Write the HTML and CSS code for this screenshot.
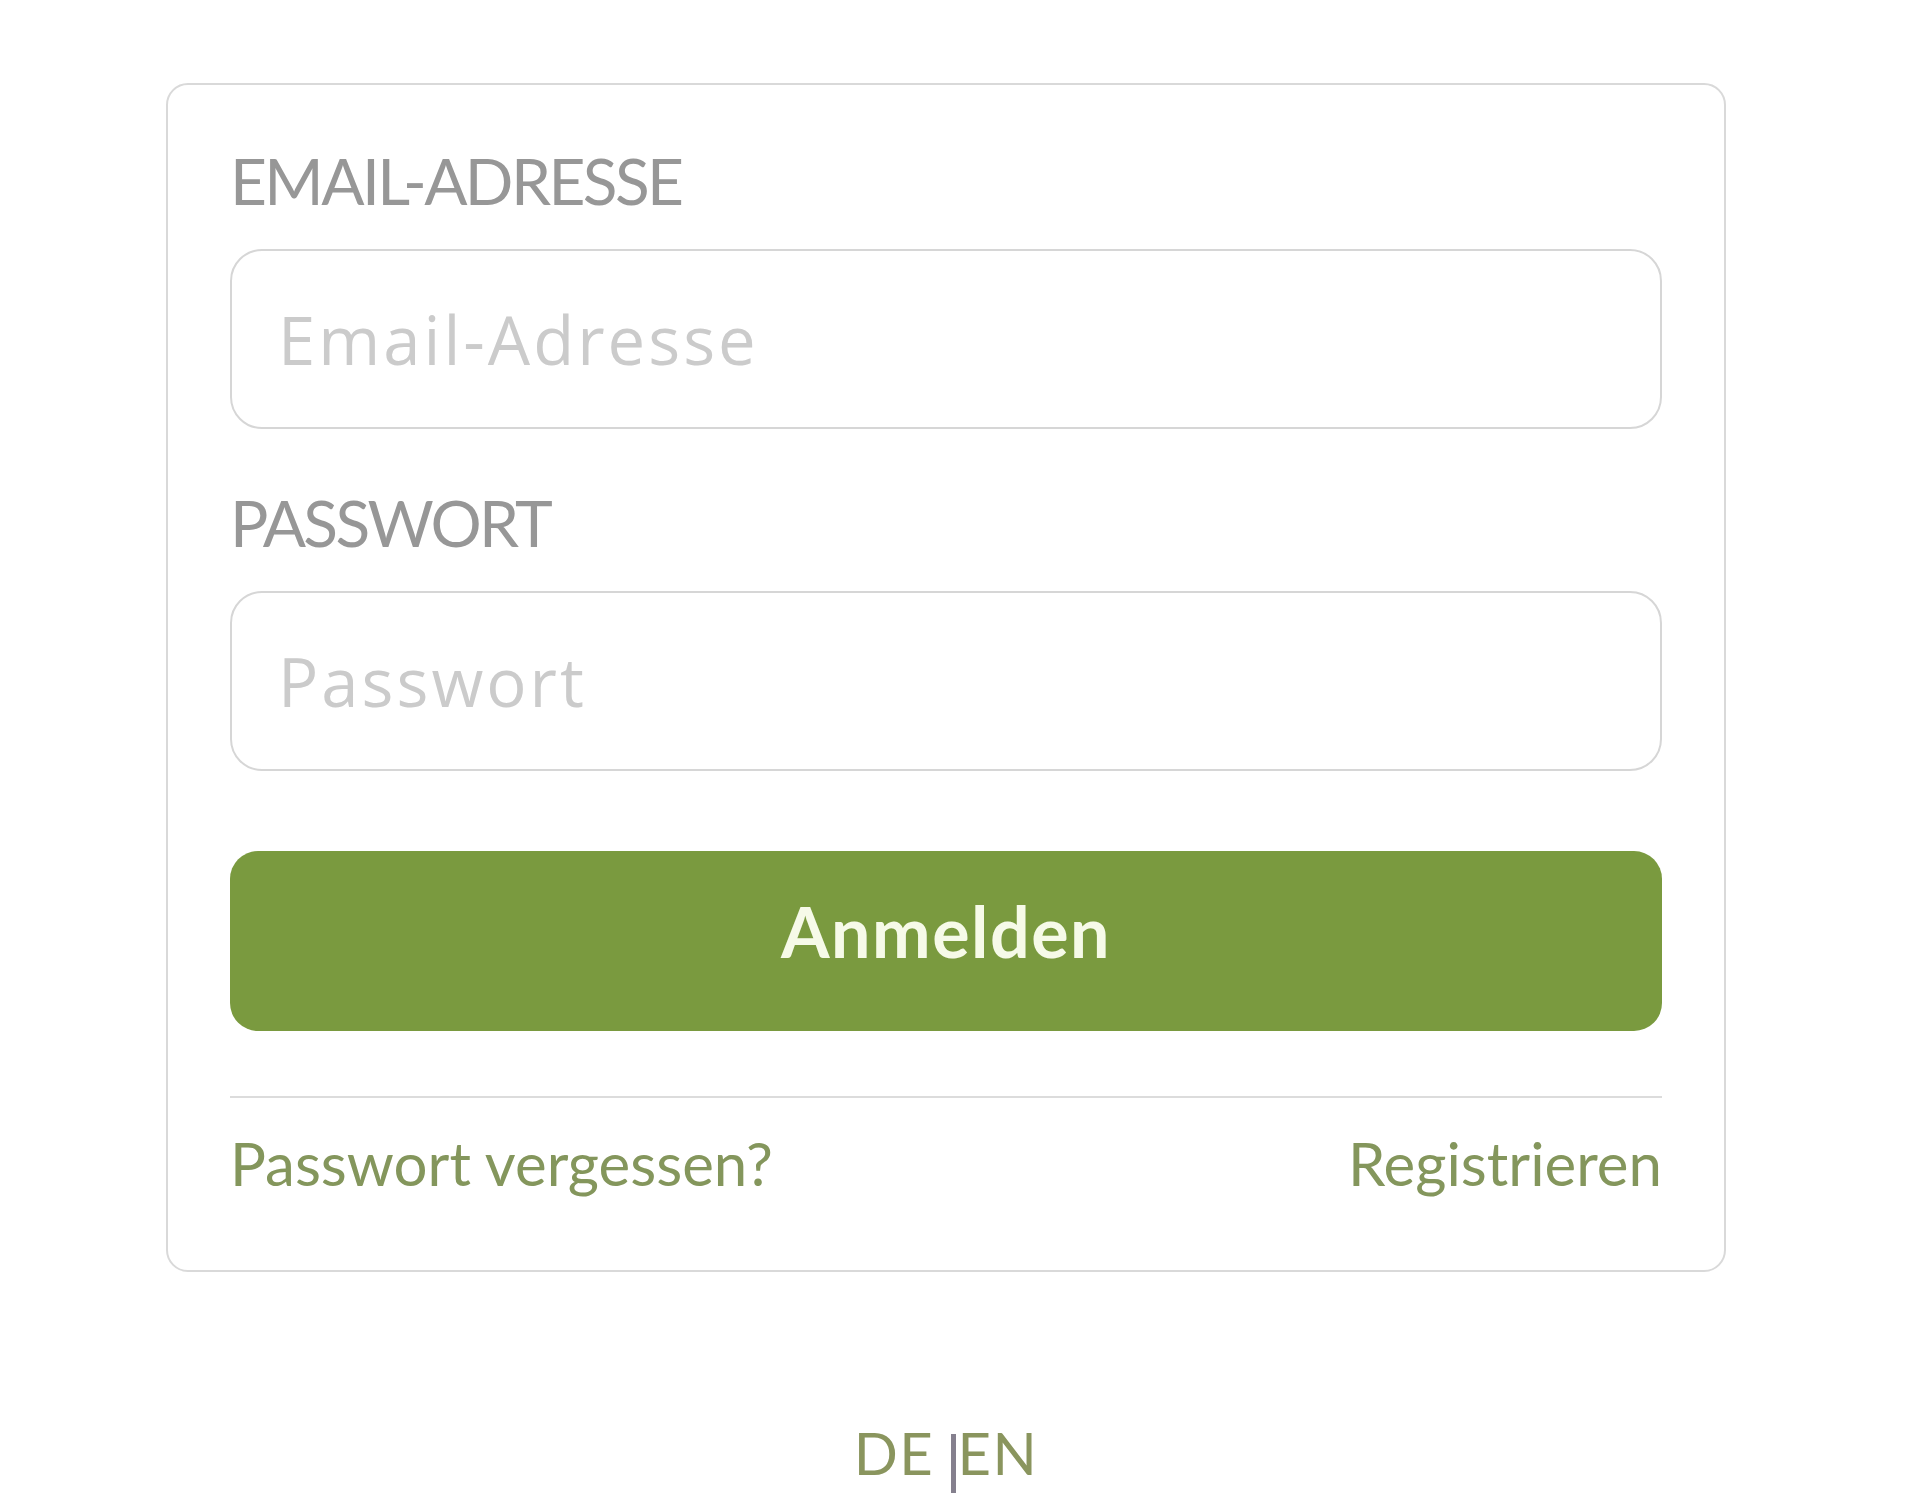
FILE: index.html
```html
<!DOCTYPE html>
<html lang="de">
<head>
  <meta charset="UTF-8">
  <meta name="viewport" content="width=device-width, initial-scale=1.0">
  <title>Anmelden</title>
  <link rel="stylesheet" href="styles.css">
</head>
<body>
  <div class="page">
    <form class="card" action="javascript:;">
      <div class="field">
        <label for="email">EMAIL-ADRESSE</label>
        <input type="email" id="email" placeholder="Email-Adresse">
      </div>
      <div class="field">
        <label for="pass">PASSWORT</label>
        <input type="password" id="pass" placeholder="Passwort">
      </div>
      <button type="submit" class="btn">Anmelden</button>
      <div class="links">
        <a href="javascript:;">Passwort vergessen?</a>
        <a href="javascript:;">Registrieren</a>
      </div>
    </form>
    <div class="lang">DE <span class="sep"></span>EN</div>
  </div>
</body>
</html>
```

FILE: styles.css
```css
html, body {
  margin: 0;
  padding: 0;
  background: #fff;
}
.page {
  padding: 83px 0 0 166px;
  width: 1560px;
  font-family: Lato, "Liberation Sans", sans-serif;
}
.card {
  display: block;
  box-sizing: border-box;
  width: 1560px;
  border: 2px solid #d9d9d9;
  border-radius: 22px;
  padding: 56px 62px 71px 62px;
}
.field label {
  display: block;
  font-size: 64px;
  line-height: 80px;
  color: #979797;
  letter-spacing: -2.6px;
  margin-bottom: 28px;
}
.field input {
  display: block;
  box-sizing: border-box;
  width: 100%;
  height: 180px;
  border: 2px solid #d6d6d6;
  border-radius: 32px;
  padding: 0 0 0 46px;
  font-family: "Open Sans", "Noto Sans", sans-serif;
  font-size: 67px;
  letter-spacing: 3px;
  color: #555;
  outline: none;
}
.field input::placeholder {
  color: #cbcbcb;
}
.field + .field {
  margin-top: 54px;
}
.btn {
  display: block;
  width: 100%;
  height: 180px;
  margin-top: 80px;
  padding: 0 0 20px 0;
  border: 0;
  border-radius: 28px;
  background: #7a9a3f;
  color: #f6fae8;
  font-family: Lato, "Liberation Sans", sans-serif;
  font-weight: 700;
  font-size: 70px;
  letter-spacing: 1.5px;
  cursor: pointer;
}
.links {
  display: flex;
  justify-content: space-between;
  margin-top: 65px;
  border-top: 2px solid #dcdcdc;
  padding-top: 29px;
}
.links a {
  font-size: 60px;
  line-height: 72px;
  color: #84965c;
  text-decoration: none;
}
.lang {
  margin-top: 146px;
  text-align: center;
  font-size: 58px;
  line-height: 70px;
  color: #8a955e;
  letter-spacing: 1.5px;
}
.lang .sep {
  display: inline-block;
  width: 5px;
  height: 80px;
  background: #85808e;
  vertical-align: top;
  margin-top: 16px;
  margin-right: 2px;
}
```
